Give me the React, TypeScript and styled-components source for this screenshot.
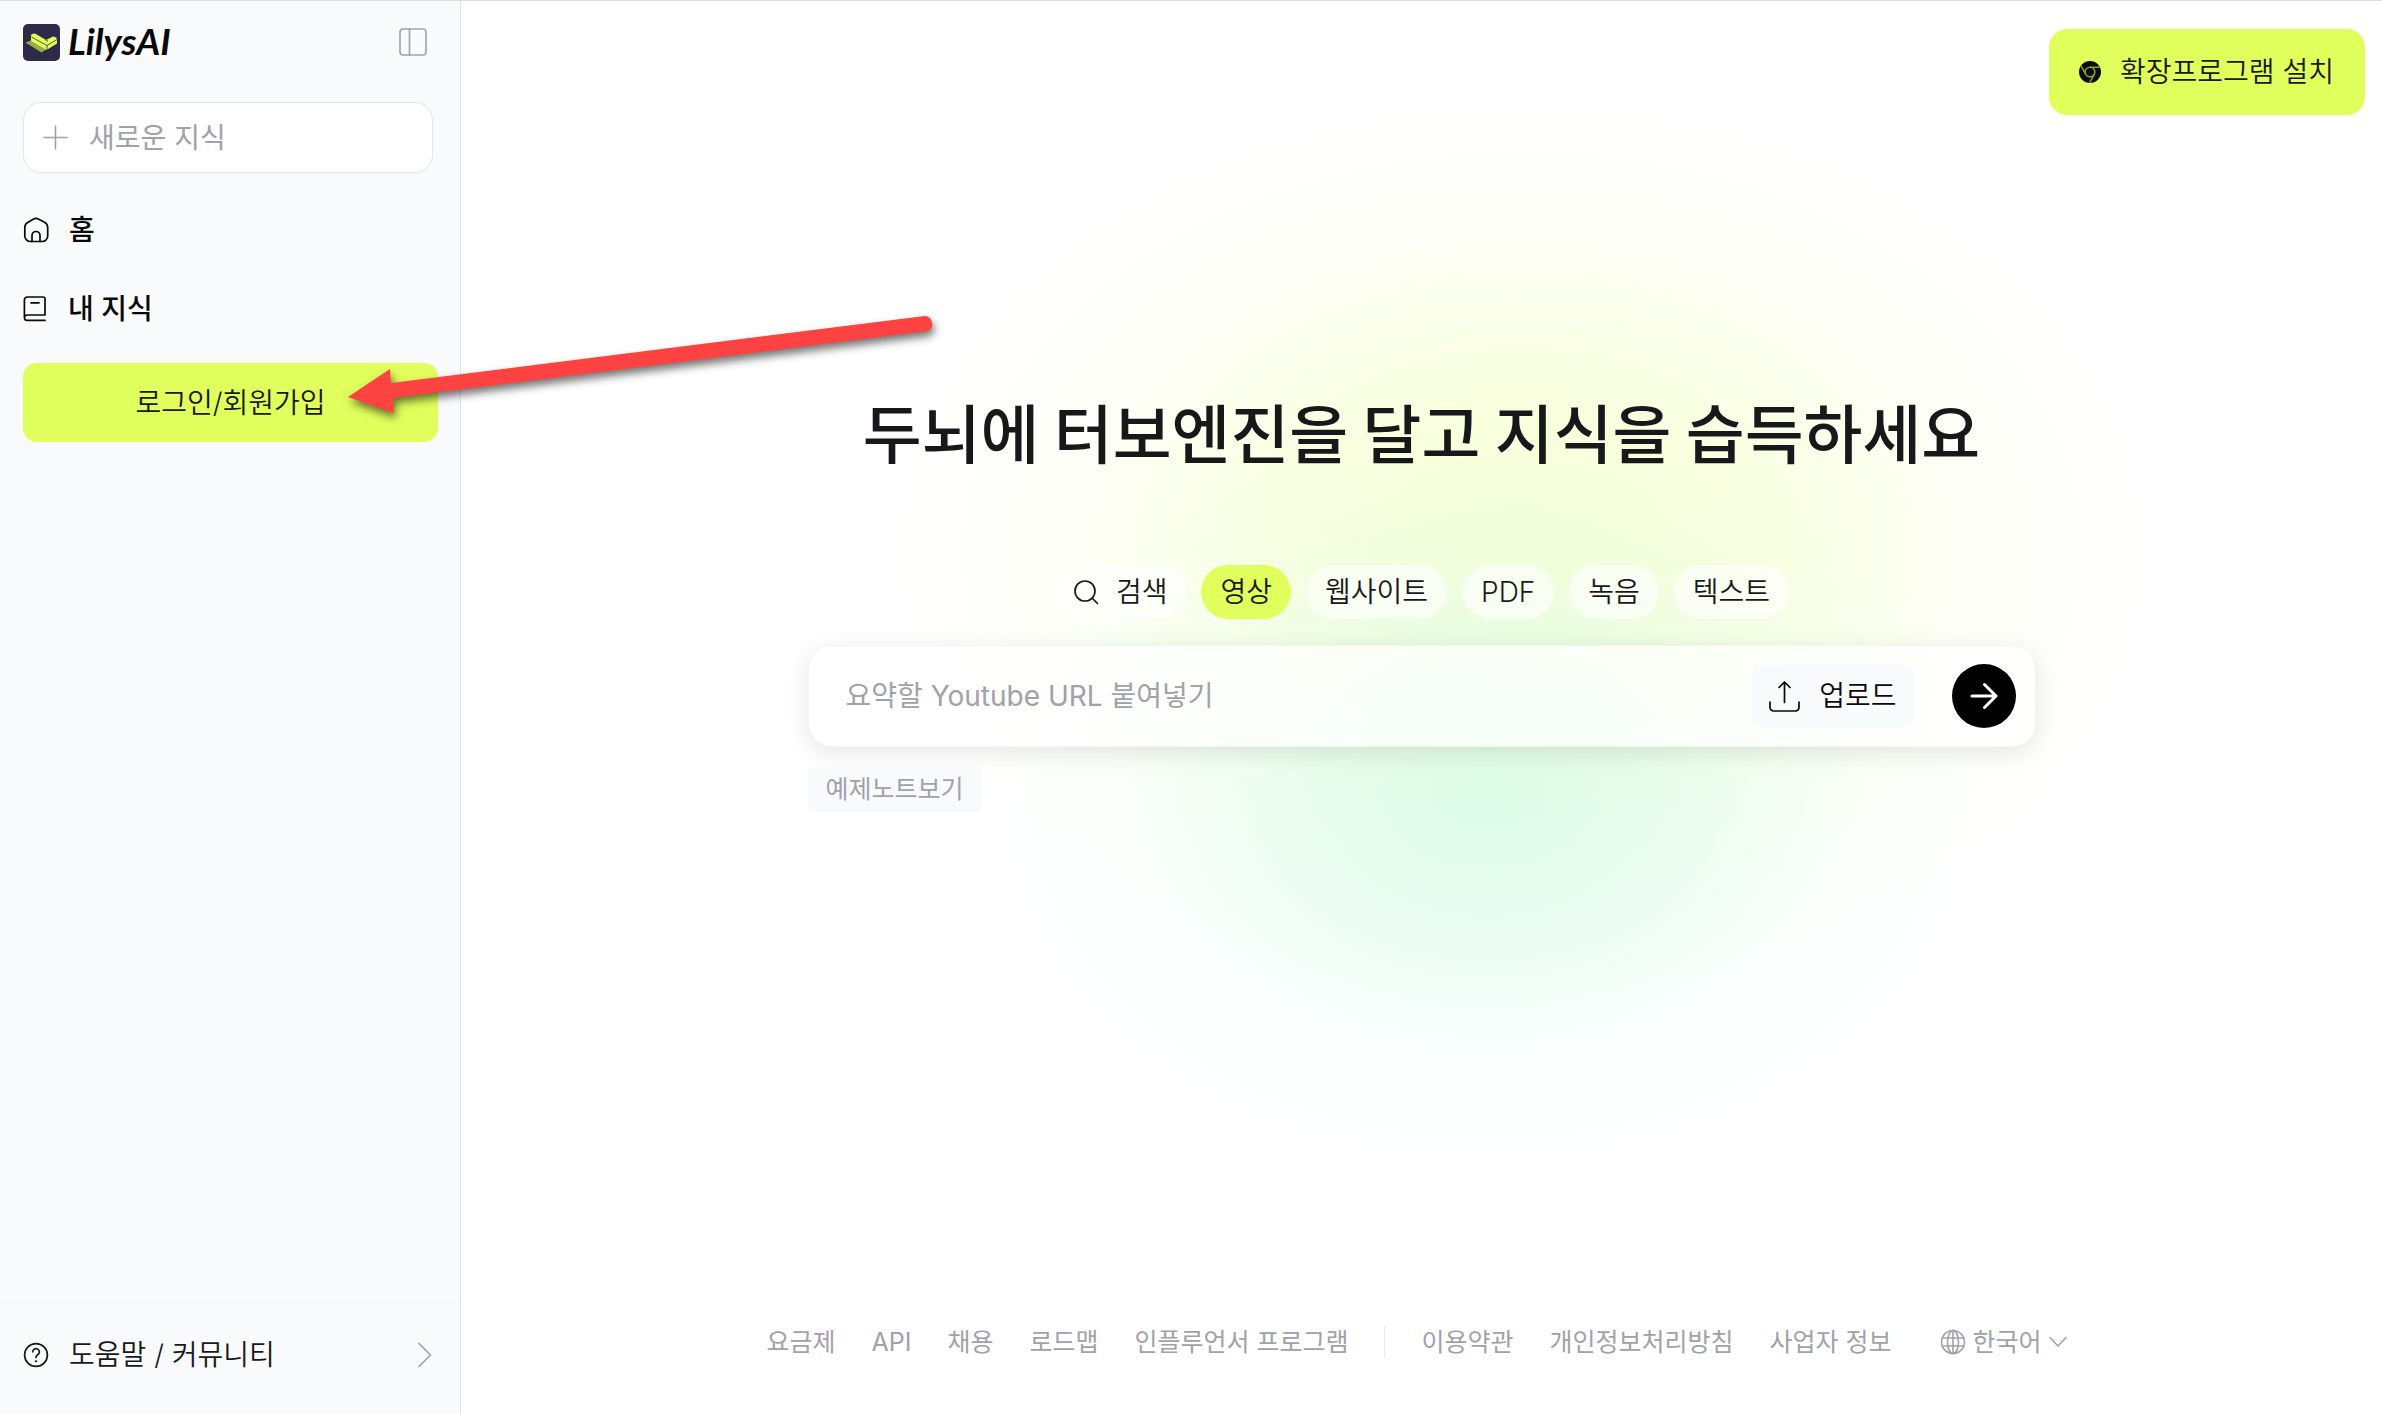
import React from "react";
import styled, { createGlobalStyle, css } from "styled-components";

const GlobalStyle = createGlobalStyle`
  *, *::before, *::after { box-sizing: border-box; }
  body {
    margin: 0;
    background: #fff;
    color: #18181b;
    font-family: Inter, "Noto Sans CJK KR", sans-serif;
    font-size: 28px;
    font-weight: 350;
    line-height: 40px;
  }
  button, input, select { font: inherit; color: inherit; margin: 0; }
  button { border: 0; background: none; padding: 0; cursor: pointer; }
  a { color: inherit; text-decoration: none; }
  svg { display: block; flex: none; }
`;

const Page = styled.div`
  position: relative;
  display: flex;
  min-height: 100vh;
  border-top: 1px solid #dfdfe2;
`;

const Sidebar = styled.aside`
  display: flex;
  flex-direction: column;
  flex: none;
  width: 461px;
  background: #f9fafc;
  border-right: 1px solid #e2e3e6;
`;

const SidebarTop = styled.div`
  display: flex;
  flex-direction: column;
  flex: 1;
  padding: 20px 22px 0 23px;
`;

const BrandRow = styled.div`
  display: flex;
  align-items: center;
  justify-content: space-between;
  height: 42px;
  padding-right: 11px;
`;

const Brand = styled.a`
  display: flex;
  align-items: flex-start;
  gap: 8px;
  color: #09090b;
  font-family: Lato, sans-serif;
  font-size: 37px;
  line-height: 34px;
  font-style: italic;
  font-weight: 700;
`;

const IconButton = styled.button`
  color: #a1a1aa;
`;

const NewButton = styled.button`
  display: flex;
  align-items: center;
  gap: 20px;
  height: 71px;
  margin: 39px 5px 0 0;
  padding: 0 19px;
  border: 1px solid #e4e4e7;
  border-radius: 18px;
  background: #fff;
  color: #a1a1aa;
  font-weight: 400;
`;

const Nav = styled.nav`
  display: flex;
  flex-direction: column;
  gap: 39px;
  margin-top: 37px;
`;

const NavLink = styled.a`
  display: flex;
  align-items: center;
  gap: 20px;
  color: #09090b;
  font-weight: 500;
`;

const accent = css`
  background: #e0ff5c;
  color: #18181b;
`;

const LoginButton = styled.button`
  ${accent}
  height: 79px;
  margin-top: 34px;
  border-radius: 14px;
`;

const HelpButton = styled.button`
  display: flex;
  align-items: center;
  gap: 20px;
  height: 111px;
  padding: 0 28px 7px 23px;
  border-top: 1px solid #f2f3f5;
`;

const HelpText = styled.span`
  flex: 1;
  text-align: left;
`;

const Main = styled.main`
  position: relative;
  display: flex;
  flex-direction: column;
  flex: 1;
  min-width: 0;
  background:
    radial-gradient(closest-side, rgba(208, 250, 230, 0.7), rgba(214, 250, 234, 0.5) 35%, rgba(222, 252, 242, 0.18) 68%, rgba(240, 255, 250, 0))
      calc(50% + 65px) 430px / 1000px 740px no-repeat,
    radial-gradient(closest-side, rgba(245, 255, 208, 0.9), rgba(246, 255, 212, 0.72) 38%, rgba(250, 255, 230, 0.36) 70%, rgba(253, 255, 245, 0))
      calc(50% + 100px) 100px / 1260px 900px no-repeat,
    #fff;
`;

const TopBar = styled.header`
  display: flex;
  justify-content: flex-end;
  padding: 28px 17px 0 0;
`;

const ExtensionButton = styled.button`
  ${accent}
  display: flex;
  align-items: center;
  gap: 19px;
  height: 86px;
  padding: 0 31px 0 30px;
  border-radius: 18px;
`;

const Hero = styled.section`
  display: flex;
  flex-direction: column;
  align-items: center;
  flex: 1;
  padding: 267px 24px 0;
`;

const Title = styled.h1`
  margin: 0;
  font-family: "Noto Sans CJK KR", sans-serif;
  font-size: 64px;
  line-height: 96px;
  font-weight: 500;
`;

const Tabs = styled.div`
  display: flex;
  gap: 15px;
  margin-top: 87px;
`;

const Tab = styled.button<{ $active?: boolean }>`
  display: flex;
  align-items: center;
  gap: 17px;
  height: 54px;
  padding: 0 19px;
  border-radius: 27px;
  background: ${(p) => (p.$active ? "#e0ff5c" : "rgba(255, 255, 255, 0.6)")};
`;

const Composer = styled.div`
  width: 100%;
  max-width: 1228px;
  margin-top: 26px;
`;

const SearchForm = styled.form`
  display: flex;
  align-items: center;
  height: 102px;
  padding: 0 19px 0 37px;
  border: 1px solid #f4f4f5;
  border-radius: 24px;
  background: rgba(255, 255, 255, 0.72);
  background-clip: padding-box;
  box-shadow: 0 6px 24px rgba(0, 0, 0, 0.1);
`;

const UrlInput = styled.input`
  flex: 1;
  min-width: 0;
  height: 60px;
  padding: 0;
  border: 0;
  outline: 0;
  background: transparent;
  font-weight: 400;
  &::placeholder { color: #a1a1aa; opacity: 1; }
`;

const UploadButton = styled.button`
  display: flex;
  align-items: center;
  gap: 19px;
  height: 62px;
  padding: 0 17px;
  border-radius: 7px;
  background: #f9fafc;
  color: #09090b;
`;

const SubmitButton = styled.button`
  display: grid;
  place-items: center;
  width: 64px;
  height: 64px;
  margin-left: 38px;
  border-radius: 50%;
  background: #000;
  color: #fff;
`;

const ExampleButton = styled.button`
  height: 46px;
  margin-top: 19px;
  padding: 0 18px;
  border-radius: 7px;
  background: #f9fafc;
  color: #a1a1aa;
  font-size: 25px;
  font-weight: 400;
`;

const Footer = styled.footer`
  display: flex;
  align-items: center;
  justify-content: center;
  gap: 36px;
  padding: 0 10px 51px 0;
  color: #a1a1aa;
  font-size: 25px;
  font-weight: 400;
  white-space: nowrap;
`;

const Divider = styled.span`
  width: 1px;
  height: 32px;
  background: #e9e9ec;
`;

const LanguageButton = styled.button`
  display: flex;
  align-items: center;
  gap: 7px;
  margin-left: 12px;
`;

const Arrow = styled.svg`
  position: absolute;
  left: 340px;
  top: 300px;
  pointer-events: none;
  filter: drop-shadow(2px 5px 4px rgba(0, 0, 0, 0.55));
`;

const stroke = {
  fill: "none",
  stroke: "currentColor",
  strokeLinecap: "round" as const,
  strokeLinejoin: "round" as const,
  "aria-hidden": true,
};

const LogoMark = () => (
  <svg width="37" height="37" viewBox="0 0 37 37" aria-hidden>
    <rect width="37" height="37" rx="5" fill="#2e2a4a" />
    <path d="M2.500 18.500 8 16.500 23 25.500 18.500 28.500Z" fill="#9aad43" />
    <path d="M8 11.500Q8 10 12 9.500L23 16 30 12.500Q34 13 34 15.500V19.500L23.500 26 8 17Z" fill="#e0ff5c" />
    <path d="M8.500 13 24 21.500 34 15.500M24 21.500V26M22.500 16 25 17.300" fill="none" stroke="#2e2a4a" strokeWidth="0.8" />
  </svg>
);

const PanelIcon = () => (
  <svg width="28" height="28" viewBox="0 0 28 28" {...stroke} strokeWidth="1.6">
    <rect x="1" y="1" width="26" height="26" rx="3" />
    <path d="M10.5 1v26" />
  </svg>
);

const PlusIcon = () => (
  <svg width="26" height="26" viewBox="0 0 26 26" {...stroke} strokeWidth="1.6">
    <path d="M12.500 1v23M0.800 12.500h23.600" />
  </svg>
);

const HomeIcon = () => (
  <svg width="26" height="26" viewBox="0 0 26 26" {...stroke} strokeWidth="1.7">
    <path d="M10.700 2a5 5 0 0 1 4.600 0l6.200 3.200a6 6 0 0 1 3.200 5.300v8.500a5.500 5.500 0 0 1-5.500 5.500H7.300a5.500 5.500 0 0 1-5.500-5.500v-8.500a6 6 0 0 1 3.200-5.300Z" />
    <path d="M9 24.500v-6a4 4 0 0 1 8 0v6" />
  </svg>
);

const BookIcon = () => (
  <svg width="25" height="26" viewBox="0 0 25 26" {...stroke} strokeWidth="1.7">
    <path d="M1.400 21.500V4a3 3 0 0 1 3-3h15.600a2 2 0 0 1 2 2v16H4.200a2.700 2.700 0 0 0 0 5.400H22M8 6.800h8" />
  </svg>
);

const HelpIcon = () => (
  <svg width="26" height="26" viewBox="0 0 26 26" {...stroke} strokeWidth="1.700">
    <circle cx="13" cy="13" r="11.400" />
    <path d="M9.800 9.800a3.300 3.300 0 1 1 4.900 3c-1.200.7-1.700 1.300-1.700 2.600" />
    <circle cx="13" cy="19.300" r="0.700" fill="currentColor" strokeWidth="1" />
  </svg>
);

const ChevronRight = () => (
  <svg width="14" height="26" viewBox="0 0 14 26" {...stroke} stroke="#a1a1aa" strokeWidth="1.700">
    <path d="m1 1.500 11.500 11.500L1 24.500" />
  </svg>
);

const ChevronDown = () => (
  <svg width="18" height="12" viewBox="0 0 18 12" {...stroke} strokeWidth="1.600">
    <path d="m1 1.500 8 8.500 8-8.500" />
  </svg>
);

const ChromeIcon = () => (
  <svg width="22" height="22" viewBox="0 0 22 22" aria-hidden>
    <circle cx="11" cy="11" r="11" fill="#0b0b0b" />
    <g fill="none" stroke="#8c9f3a" strokeWidth="1.500">
      <circle cx="11" cy="11" r="4.800" />
      <path d="M11 6.200h9.600M6.800 13.400 2.200 5.200M15.200 13.400 10.600 21.700" />
    </g>
  </svg>
);

const SearchIcon = () => (
  <svg width="26" height="26" viewBox="0 0 26 26" {...stroke} strokeWidth="1.700">
    <circle cx="12" cy="12" r="10" />
    <path d="m19.500 19.500 5 5" />
  </svg>
);

const UploadIcon = () => (
  <svg width="31" height="31" viewBox="0 0 31 31" {...stroke} strokeWidth="1.700">
    <path d="M15.500 21.500V1.500M10 6.500l5.500-5.500L21 6.500M1 21v5.500a3.500 3.500 0 0 0 3.500 3.500h22a3.500 3.500 0 0 0 3.500-3.500V21" />
  </svg>
);

const SubmitIcon = () => (
  <svg width="28" height="28" viewBox="0 0 28 28" {...stroke} strokeWidth="3">
    <path d="M2 14h24M14.500 2.500 26 14 14.500 25.500" />
  </svg>
);

const GlobeIcon = () => (
  <svg width="26" height="26" viewBox="0 0 26 26" {...stroke} strokeWidth="1.600">
    <circle cx="13" cy="13" r="11.500" />
    <ellipse cx="13" cy="13" rx="5.500" ry="11.500" />
    <path d="M13 1.500v23M2.500 9h21M2.500 17h21" />
  </svg>
);

const tabs = ["검색", "영상", "웹사이트", "PDF", "녹음", "텍스트"];
const serviceLinks = ["요금제", "API", "채용", "로드맵", "인플루언서 프로그램"];
const legalLinks = ["이용약관", "개인정보처리방침", "사업자 정보"];

export default function App() {
  return (
    <Page>
      <GlobalStyle />
      <Sidebar>
        <SidebarTop>
          <BrandRow>
            <Brand href="#"><LogoMark />LilysAI</Brand>
            <IconButton type="button" aria-label="사이드바"><PanelIcon /></IconButton>
          </BrandRow>
          <NewButton type="button"><PlusIcon />새로운 지식</NewButton>
          <Nav>
            <NavLink href="#"><HomeIcon />홈</NavLink>
            <NavLink href="#"><BookIcon />내 지식</NavLink>
          </Nav>
          <LoginButton type="button">로그인/회원가입</LoginButton>
        </SidebarTop>
        <HelpButton type="button">
          <HelpIcon />
          <HelpText>도움말 / 커뮤니티</HelpText>
          <ChevronRight />
        </HelpButton>
      </Sidebar>
      <Main>
        <TopBar>
          <ExtensionButton type="button"><ChromeIcon />확장프로그램 설치</ExtensionButton>
        </TopBar>
        <Hero>
          <Title>두뇌에 터보엔진을 달고 지식을 습득하세요</Title>
          <Tabs>
            {tabs.map((label) => (
              <Tab key={label} type="button" $active={label === "영상"}>
                {label === "검색" && <SearchIcon />}
                {label}
              </Tab>
            ))}
          </Tabs>
          <Composer>
            <SearchForm onSubmit={(e) => e.preventDefault()}>
              <UrlInput type="text" aria-label="Youtube URL" placeholder="요약할 Youtube URL 붙여넣기" />
              <UploadButton type="button"><UploadIcon />업로드</UploadButton>
              <SubmitButton type="submit" aria-label="요약"><SubmitIcon /></SubmitButton>
            </SearchForm>
            <ExampleButton type="button">예제노트보기</ExampleButton>
          </Composer>
        </Hero>
        <Footer>
          {serviceLinks.map((label) => <a key={label} href="#">{label}</a>)}
          <Divider />
          {legalLinks.map((label) => <a key={label} href="#">{label}</a>)}
          <LanguageButton type="button"><GlobeIcon />한국어<ChevronDown /></LanguageButton>
        </Footer>
      </Main>
      <Arrow width="610" height="130" viewBox="340 301 610 130" aria-hidden>
        <path d="M348 397 390 369 391 383 925 316A8 8 0 0 1 928 331L393 398 394 413Z" fill="#fd4242" />
      </Arrow>
    </Page>
  );
}
